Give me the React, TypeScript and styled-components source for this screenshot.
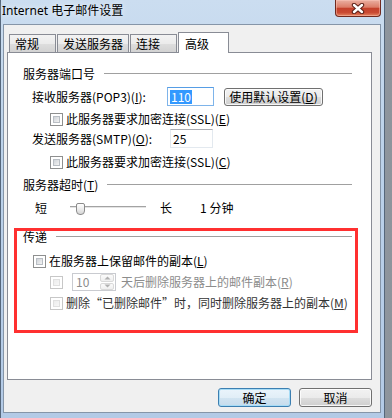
import React from "react";
import styled, { createGlobalStyle } from "styled-components";

const GlobalStyle = createGlobalStyle`
  html, body {
    margin: 0;
    padding: 0;
  }
  body {
    width: 392px;
    height: 418px;
    overflow: hidden;
    background: #c4cad1;
    font-family: "Noto Sans CJK SC", "Noto Sans", sans-serif;
    font-size: 12px;
    color: #000;
  }
`;

const Desktop = styled.div`
  width: 392px;
  height: 418px;
  display: flex;
  overflow: hidden;
  background: linear-gradient(to right, #dde1e6 0%, #b8bec6 40%, #8d949c 100%);
`;

const Window = styled.div`
  width: 385px;
  height: 418px;
  flex-shrink: 0;
  box-sizing: border-box;
  border-left: 1px solid #56677b;
  border-right: 1px solid #56677b;
  background: linear-gradient(to bottom, #cbddf0 0%, #bcd2ea 35%, #b3cae6 100%);
  display: flex;
  flex-direction: column;
`;

const TitleBar = styled.div`
  height: 24px;
  display: flex;
  align-items: flex-start;
  padding-left: 1px;
`;

const Title = styled.div`
  font-family: "Noto Sans", "Noto Sans CJK SC", sans-serif;
  font-size: 12px;
  line-height: 22px;
  color: #000;
  text-shadow: 0 0 6px rgba(255, 255, 255, 0.9);
`;

const CloseButton = styled.div`
  margin-left: auto;
  margin-right: 3px;
  width: 46px;
  height: 17px;
  box-sizing: border-box;
  border: 1px solid #70291e;
  border-top: none;
  border-radius: 0 0 4px 4px;
  background: linear-gradient(
    to bottom,
    #eab0a2 0%,
    #dc7d68 45%,
    #c4412b 52%,
    #c94a33 78%,
    #e58461 100%
  );
  box-shadow: inset 0 0 0 1px rgba(255, 205, 190, 0.45);
  display: flex;
  align-items: center;
  justify-content: center;
`;

const Client = styled.div`
  margin: 0 3px 0 2px;
  height: 389px;
  box-sizing: border-box;
  border: 1px solid #8595a8;
  background: #f0f0f0;
  padding: 7px 8px 0 3px;
  display: flex;
  flex-direction: column;
`;

const TabStrip = styled.div`
  height: 20px;
  display: flex;
  align-items: flex-end;
  padding-left: 2px;
`;

const Tab = styled.div<{ $active?: boolean }>`
  box-sizing: border-box;
  min-width: ${p => (p.$active ? 51 : 47)}px;
  height: ${p => (p.$active ? 21 : 18)}px;
  margin-right: ${p => (p.$active ? 0 : 1)}px;
  margin-bottom: ${p => (p.$active ? -1 : 0)}px;
  padding: ${p => (p.$active ? "2px 6px 0" : "0 5px")};
  border: 1px solid #898c95;
  border-bottom: none;
  background: ${p =>
    p.$active
      ? "#fff"
      : "linear-gradient(to bottom, #f3f3f3 0%, #ebebeb 50%, #dedede 51%, #d2d2d2 100%)"};
  position: ${p => (p.$active ? "relative" : "static")};
  z-index: ${p => (p.$active ? 1 : "auto")};
  line-height: 17px;
  white-space: nowrap;
`;

const Panel = styled.div`
  height: 328px;
  box-sizing: border-box;
  border: 1px solid #898c95;
  background: #fff;
  padding: 13px 19px 0 15px;
  display: flex;
  flex-direction: column;
`;

const GroupHeader = styled.div<{ $top?: number; $h?: number }>`
  display: flex;
  align-items: center;
  gap: 9px;
  height: ${p => p.$h ?? 16}px;
  line-height: ${p => p.$h ?? 16}px;
  margin-top: ${p => p.$top ?? 0}px;
  white-space: nowrap;
`;

const GroupLine = styled.div`
  flex: 1;
  height: 1px;
  margin-top: -2px;
  background: #a0a0a0;
`;

const Row = styled.div<{ $top?: number; $h?: number; $indent?: number }>`
  display: flex;
  align-items: center;
  height: ${p => p.$h ?? 16}px;
  margin-top: ${p => p.$top ?? 0}px;
  padding-left: ${p => p.$indent ?? 0}px;
  white-space: nowrap;
  line-height: 16px;
`;

const Label = styled.span<{ $width?: number; $gap?: number; $tone?: "muted" | "soft" }>`
  display: inline-block;
  width: ${p => (p.$width ? `${p.$width}px` : "auto")};
  margin-left: ${p => p.$gap ?? 0}px;
  color: ${p => (p.$tone === "muted" ? "#8c8c8c" : p.$tone === "soft" ? "#333" : "#000")};
  flex-shrink: 0;
`;

const Quote = styled.span<{ $open?: boolean }>`
  display: inline-block;
  width: 12px;
  text-align: ${p => (p.$open ? "right" : "left")};
`;

const TextBox = styled.div<{ $width: number; $focused?: boolean }>`
  width: ${p => p.$width}px;
  height: 19px;
  box-sizing: border-box;
  border: 1px solid ${p => (p.$focused ? "#7eb4ea" : "#e3e9ef")};
  border-top-color: ${p => (p.$focused ? "#569de5" : "#abadb3")};
  background: #fff;
  padding: 0 2px;
  display: flex;
  align-items: center;
  line-height: 14px;
`;

const Selected = styled.span`
  background: #3399ff;
  color: #fff;
  padding: 0 1px;
`;

const Button = styled.div<{ $width: number; $default?: boolean; $gap?: number }>`
  width: ${p => p.$width}px;
  height: ${p => (p.$default !== undefined ? 19 : 18)}px;
  margin-left: ${p => p.$gap ?? 0}px;
  box-sizing: border-box;
  border: 1px solid ${p => (p.$default ? "#3c7fb1" : "#707070")};
  border-radius: 3px;
  background: ${p =>
    p.$default
      ? "linear-gradient(to bottom, #eaf4fb 0%, #e1eef7 50%, #d2e4f1 51%, #c6dced 100%)"
      : "linear-gradient(to bottom, #f2f2f2 0%, #ebebeb 50%, #dddddd 51%, #cfcfcf 100%)"};
  box-shadow: inset 0 0 0 1px ${p => (p.$default ? "#a7dcf6" : "rgba(255,255,255,0.8)")};
  display: flex;
  align-items: center;
  justify-content: center;
  line-height: 16px;
  white-space: nowrap;
`;

const Check = styled.div<{ $disabled?: boolean; $gap?: number }>`
  width: 13px;
  height: 13px;
  flex-shrink: 0;
  box-sizing: border-box;
  margin-left: ${p => p.$gap ?? 0}px;
  margin-right: 3px;
  border: 1px solid ${p => (p.$disabled ? "#c7c7c7" : "#8e8f8f")};
  background: #fff;
  padding: 2px;

  &::after {
    content: "";
    display: block;
    width: 100%;
    height: 100%;
    box-sizing: border-box;
    border: 1px solid ${p => (p.$disabled ? "#e0e0e0" : "#b9bec4")};
    background: ${p =>
      p.$disabled
        ? "linear-gradient(135deg, #ececec, #f7f7f7)"
        : "linear-gradient(135deg, #cfd3d8, #f3f3f3)"};
  }
`;

const Slider = styled.div`
  width: 76px;
  height: 16px;
  margin-left: 23px;
  display: flex;
  align-items: flex-start;
  background: linear-gradient(
    to bottom,
    transparent 6px,
    #a3a3a3 6px,
    #a3a3a3 7px,
    #e4e4e4 7px,
    #e4e4e4 8px,
    transparent 8px
  );
`;

const Thumb = styled.div`
  width: 9px;
  height: 12px;
  margin: 3px 0 0 6px;
  box-sizing: border-box;
  border: 1px solid #8b8b8b;
  border-radius: 2px 2px 4px 4px;
  background: linear-gradient(to bottom, #ffffff 0%, #ececec 50%, #d6d6d6 100%);
`;

const Highlight = styled.div`
  margin: 12px -6px 0 -9px;
  border: 3px solid #ff3030;
  padding: 0 3px 20px 6px;
  display: flex;
  flex-direction: column;
`;

const Spin = styled.div`
  width: 44px;
  height: 18px;
  box-sizing: border-box;
  margin-left: 6px;
  border: 1px solid #c9cbd0;
  background: #fff;
  display: flex;
  align-items: center;
`;

const SpinValue = styled.span`
  flex: 1;
  padding-left: 3px;
  color: #8c8c8c;
  line-height: 14px;
`;

const SpinButtons = styled.div`
  width: 14px;
  height: 16px;
  display: flex;
  flex-direction: column;
  gap: 1px;
  margin-right: 1px;
`;

const SpinArrow = styled.div`
  flex: 1;
  box-sizing: border-box;
  border: 1px solid #d9d9d9;
  border-radius: 2px;
  background: linear-gradient(to bottom, #fbfbfb, #efefef);
  display: flex;
  align-items: center;
  justify-content: center;
`;

const Footer = styled.div`
  display: flex;
  justify-content: flex-end;
  gap: 8px;
  margin-top: 8px;
`;

const Key = styled.u`
  text-underline-offset: 1px;
`;

const Arrow = ({ up }: { up?: boolean }) => (
  <svg width="7" height="4" viewBox="0 0 7 4">
    <path d={up ? "M0.5 3.5 L3.5 0.5 L6.5 3.5 Z" : "M0.5 0.5 L3.5 3.5 L6.5 0.5 Z"} fill="#b0b0b0" />
  </svg>
);

const CloseGlyph = () => (
  <svg width="14" height="11" viewBox="0 0 14 11">
    <path d="M3 2 L11 9 M11 2 L3 9" stroke="#5a2017" strokeWidth="4.4" strokeLinecap="round" />
    <path d="M3 2 L11 9 M11 2 L3 9" stroke="#ffffff" strokeWidth="2.4" strokeLinecap="round" />
  </svg>
);

export default function App() {
  return (
    <>
      <GlobalStyle />
      <Desktop>
        <Window>
          <TitleBar>
            <Title>Internet 电子邮件设置</Title>
            <CloseButton>
              <CloseGlyph />
            </CloseButton>
          </TitleBar>
          <Client>
            <TabStrip>
              <Tab>常规</Tab>
              <Tab>发送服务器</Tab>
              <Tab>连接</Tab>
              <Tab $active>高级</Tab>
            </TabStrip>
            <Panel>
              <GroupHeader>
                <span>服务器端口号</span>
                <GroupLine />
              </GroupHeader>
              <Row $top={5} $h={19} $indent={9}>
                <Label $width={135}>
                  接收服务器(POP3)(<Key>I</Key>):
                </Label>
                <TextBox $width={47} $focused>
                  <Selected>110</Selected>
                </TextBox>
                <Button $width={99} $gap={10}>
                  <span>
                    使用默认设置(<Key>D</Key>)
                  </span>
                </Button>
              </Row>
              <Row $top={6} $h={14} $indent={27}>
                <Check />
                <Label>
                  此服务器要求加密连接(SSL)(<Key>E</Key>)
                </Label>
              </Row>
              <Row $top={3} $h={19} $indent={9}>
                <Label $width={138}>
                  发送服务器(SMTP)(<Key>O</Key>):
                </Label>
                <TextBox $width={43}>25</TextBox>
              </Row>
              <Row $top={7} $h={14} $indent={27}>
                <Check />
                <Label>
                  此服务器要求加密连接(SSL)(<Key>C</Key>)
                </Label>
              </Row>
              <GroupHeader $top={8}>
                <span>
                  服务器超时(<Key>T</Key>)
                </span>
                <GroupLine />
              </GroupHeader>
              <Row $top={7} $indent={12}>
                <Label>短</Label>
                <Slider>
                  <Thumb />
                </Slider>
                <Label $gap={14}>长</Label>
                <Label $gap={28}>1 分钟</Label>
              </Row>
              <Highlight>
                <GroupHeader $h={12}>
                  <span>传递</span>
                  <GroupLine />
                </GroupHeader>
                <Row $top={11} $h={14} $indent={10}>
                  <Check />
                  <Label>
                    在服务器上保留邮件的副本(<Key>L</Key>)
                  </Label>
                </Row>
                <Row $top={5} $h={18} $indent={27}>
                  <Check $disabled />
                  <Spin>
                    <SpinValue>10</SpinValue>
                    <SpinButtons>
                      <SpinArrow>
                        <Arrow up />
                      </SpinArrow>
                      <SpinArrow>
                        <Arrow />
                      </SpinArrow>
                    </SpinButtons>
                  </Spin>
                  <Label $gap={5} $tone="muted">
                    天后删除服务器上的邮件副本(<Key>R</Key>)
                  </Label>
                </Row>
                <Row $top={5} $h={14} $indent={27}>
                  <Check $disabled />
                  <Label $tone="soft">
                    删除<Quote $open>“</Quote>已删除邮件<Quote>”</Quote>时，同时删除服务器上的副本(<Key>M</Key>)
                  </Label>
                </Row>
              </Highlight>
            </Panel>
            <Footer>
              <Button $width={73} $default>
                确定
              </Button>
              <Button $width={73} $default={false}>
                取消
              </Button>
            </Footer>
          </Client>
        </Window>
      </Desktop>
    </>
  );
}
